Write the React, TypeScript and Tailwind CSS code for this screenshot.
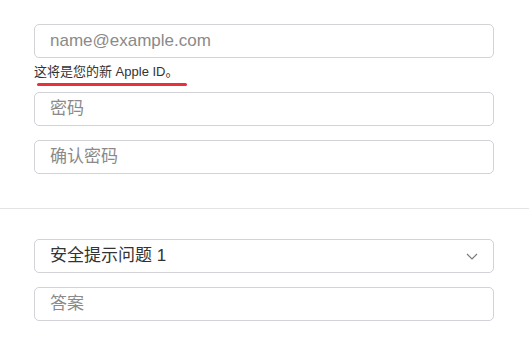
const font = { fontFamily: '"Liberation Sans", Arial, "Noto Sans CJK SC", sans-serif' };

const inputClass =
  "block w-[460px] h-[34px] rounded-[5px] border border-[#d2d2d7] bg-white px-[15px] text-[17px] text-[#333] placeholder:text-[#8a8a8a] outline-none";

export default function App() {
  return (
    <div className="w-[529px] h-[339px] bg-white overflow-hidden" style={font}>
      <div className="pl-[34px] pt-[24px]">
        <input className={inputClass} placeholder="name@example.com" style={font} />
        <div className="relative h-[34px]">
          <p className="pt-[6px] text-[13px] leading-[15px] text-[#333]">这将是您的新 Apple ID。</p>
          <div className="absolute left-[3px] top-[25px] h-[3px] w-[150px] rounded-full bg-[#e8313b]" />
        </div>
        <input className={inputClass} placeholder="密码" style={font} />
        <input className={`${inputClass} mt-[14px]`} placeholder="确认密码" style={font} />
      </div>

      <div className="mt-[34px] h-px w-full bg-[#e3e3e3]" />

      <div className="pl-[34px] pt-[30px]">
        <div className="flex w-[460px] h-[34px] items-center justify-between rounded-[5px] border border-[#d2d2d7] bg-white pl-[15px] pr-[15px]">
          <span className="text-[17px] text-[#333]">安全提示问题 1</span>
          <svg width="12" height="7" viewBox="0 0 12 7" fill="none">
            <path d="M1 1l5 5 5-5" stroke="#7a7a7a" strokeWidth="1.2" />
          </svg>
        </div>
        <input className={`${inputClass} mt-[14px]`} placeholder="答案" style={font} />
      </div>
    </div>
  );
}
